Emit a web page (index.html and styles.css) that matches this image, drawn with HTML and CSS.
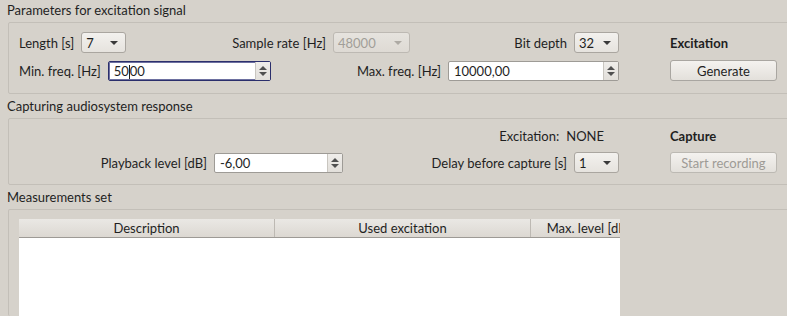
FILE: index.html
```html
<!DOCTYPE html>
<html lang="en">
<head>
    <meta charset="UTF-8">
    <title>Measurement</title>
    <link rel="stylesheet" href="styles.css">
</head>
<body>
    <div class="group first">
        <div class="group-title">Parameters for excitation signal</div>
        <div class="frame gen">
            <div class="row">
                <div class="cell" style="width: 107px">
                    <span class="label">Length [s]</span>
                    <div class="combo w45"><span>7</span><i class="arrow"></i></div>
                </div>
                <div class="cell" style="width: 284px">
                    <span class="label">Sample rate [Hz]</span>
                    <div class="combo disabled w77"><span>48000</span><i class="arrow"></i></div>
                </div>
                <div class="cell" style="width: 209px">
                    <span class="label">Bit depth</span>
                    <div class="combo w45"><span>32</span><i class="arrow"></i></div>
                </div>
                <div class="side"><b>Excitation</b></div>
            </div>
            <div class="row r2">
                <div class="cell" style="width: 252px">
                    <span class="label">Min. freq. [Hz]</span>
                    <div class="spin focus" style="width: 164px"><span class="val">50<span class="caret"></span>00</span><span class="spin-btn"><i class="up"></i><i class="down"></i></span></div>
                </div>
                <div class="cell" style="width: 348px">
                    <span class="label">Max. freq. [Hz]</span>
                    <div class="spin" style="width: 171px"><span class="val">10000,00</span><span class="spin-btn"><i class="up"></i><i class="down"></i></span></div>
                </div>
                <div class="side"><button class="btn">Generate</button></div>
            </div>
        </div>
    </div>

    <div class="group">
        <div class="group-title">Capturing audiosystem response</div>
        <div class="frame cap">
            <div class="row">
                <div class="cell status" style="width: 600px">
                    <span class="label">Excitation:</span>
                    <span class="label">NONE</span>
                </div>
                <div class="side"><b>Capture</b></div>
            </div>
            <div class="row r2">
                <div class="cell" style="width: 324px">
                    <span class="label">Playback level [dB]</span>
                    <div class="spin" style="width: 129px"><span class="val">-6,00</span><span class="spin-btn"><i class="up"></i><i class="down"></i></span></div>
                </div>
                <div class="cell" style="width: 276px">
                    <span class="label">Delay before capture [s]</span>
                    <div class="combo w45"><span>1</span><i class="arrow"></i></div>
                </div>
                <div class="side"><button class="btn" disabled>Start recording</button></div>
            </div>
        </div>
    </div>

    <div class="group">
        <div class="group-title">Measurements set</div>
        <div class="frame meas">
            <div class="table">
                <div class="thead">
                    <div class="th" style="width: 256px">Description</div>
                    <div class="th" style="width: 256px">Used excitation</div>
                    <div class="th" style="width: 116px">Max. level [dB]</div>
                </div>
                <div class="tbody"></div>
            </div>
        </div>
    </div>
</body>
</html>
```

FILE: styles.css
```css
body {
    margin: 0;
    padding: 0;
    background: #d6d2cb;
    font-family: Lato, "Open Sans", sans-serif;
    font-size: 13px;
    color: #1f1f1f;
    overflow: hidden;
    width: 787px;
    height: 316px;
}
.group-title {
    height: 24px;
    line-height: 25px;
    padding-left: 7px;
}
.first .group-title {
    height: 22px;
    line-height: 21px;
}
.frame {
    margin-left: 8px;
    margin-right: -6px;
    border: 1px solid #c3bfb8;
    border-radius: 2px;
    padding-left: 10px;
}
.gen {
    box-sizing: border-box;
    height: 72px;
    padding-top: 9px;
}
.cap {
    box-sizing: border-box;
    height: 67px;
    padding-top: 7px;
}
.cap .row:first-child {
    height: 20px;
}
.cap .r2 {
    margin-top: 6px;
}
.meas {
    box-sizing: border-box;
    height: 107px;
    padding-top: 9px;
    border-bottom: none;
}
.row {
    display: flex;
    align-items: center;
    height: 21px;
}
.gen .r2 {
    margin-top: 7px;
}
.cell {
    display: flex;
    justify-content: flex-end;
    align-items: center;
    gap: 7px;
    height: 100%;
}
.status {
    padding-right: 15px;
    box-sizing: border-box;
}
.side {
    margin-left: 51px;
}
.side b {
    font-weight: bold;
}
.label {
    white-space: nowrap;
}
.combo {
    box-sizing: border-box;
    height: 21px;
    border: 1px solid #aaa6a0;
    border-radius: 3px;
    background: linear-gradient(#f3f1ee, #e6e3de);
    display: flex;
    align-items: center;
    justify-content: space-between;
    padding: 0 7px 0 4px;
}
.w45 { width: 45px; }
.w77 { width: 77px; }
.combo.disabled {
    color: #a19e98;
    border-color: #bdb9b3;
    background: linear-gradient(#e6e3de, #dedad4);
}
.arrow {
    width: 0;
    height: 0;
    border-left: 4px solid transparent;
    border-right: 4px solid transparent;
    border-top: 4px solid #3a3a3a;
    margin-top: 1px;
}
.disabled .arrow {
    border-top-color: #aeaaa4;
}
.spin {
    box-sizing: border-box;
    height: 20px;
    border: 1px solid #9e9b96;
    border-radius: 2px;
    background: #fff;
    display: flex;
    align-items: center;
    justify-content: space-between;
}
.spin.focus {
    border-color: #2b2f6c;
    box-shadow: inset 0 0 0 1px #6d70a0;
}
.val {
    padding-left: 5px;
}
.caret {
    display: inline-block;
    width: 1px;
    height: 14px;
    background: #1f1f1f;
    vertical-align: -3px;
}
.spin-btn {
    box-sizing: border-box;
    width: 15px;
    height: 100%;
    background: linear-gradient(#efedea, #e2dfda);
    border-left: 1px solid #c9c6c0;
    display: flex;
    flex-direction: column;
    align-items: center;
    justify-content: center;
    gap: 2px;
}
.up, .down {
    width: 0;
    height: 0;
    border-left: 4px solid transparent;
    border-right: 4px solid transparent;
}
.up {
    border-bottom: 4px solid #505050;
}
.down {
    border-top: 4px solid #505050;
}
.btn {
    box-sizing: border-box;
    width: 107px;
    height: 21px;
    border: 1px solid #a9a6a1;
    border-radius: 3px;
    background: linear-gradient(#f4f2ef, #e3e0db);
    font-family: inherit;
    font-size: 13px;
    color: #1f1f1f;
    padding: 0;
}
.btn:disabled {
    color: #9e9b96;
    border-color: #bcb9b3;
}
.table {
    width: 601px;
    height: 97px;
    background: #fff;
    overflow: hidden;
}
.thead {
    display: flex;
    height: 18px;
    border-bottom: 1px solid #9d9a95;
    background: linear-gradient(#eae8e4, #dcd8d2);
}
.th {
    flex: none;
    box-sizing: border-box;
    text-align: center;
    line-height: 18px;
    border-right: 1px solid #bdb9b3;
    white-space: nowrap;
}
```
